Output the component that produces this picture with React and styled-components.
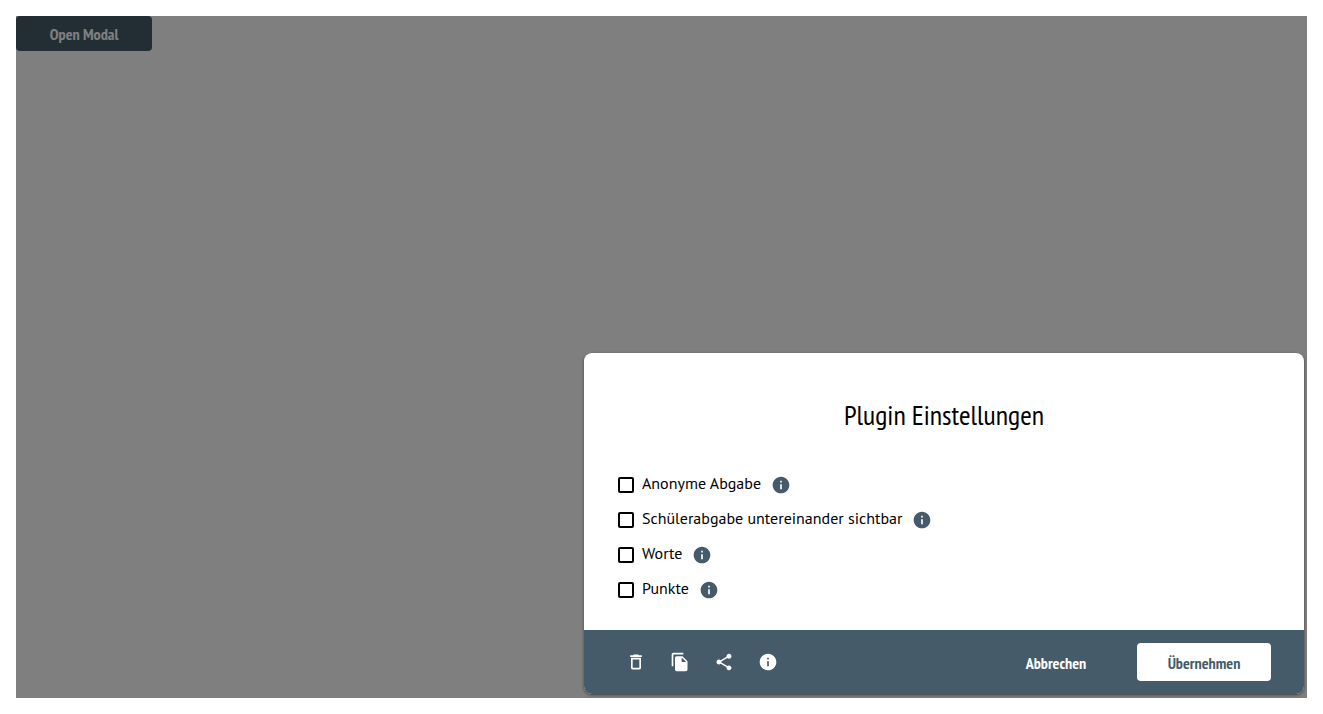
import React from "react";
import styled, { createGlobalStyle } from "styled-components";
import { MdDeleteOutline, MdFileCopy, MdInfo, MdShare } from "react-icons/md";

const narrow = `"PT Sans Narrow", "Liberation Sans Narrow", "Open Sans", sans-serif`;
const body = `"PT Sans", "Noto Sans", sans-serif`;
const slate = "#455b69";

const GlobalStyle = createGlobalStyle`
  *, *::before, *::after { box-sizing: border-box; }
  body { margin: 0; background: #fff; font-family: ${body}; color: #000; }
`;

const Stage = styled.main`
  position: relative;
  margin: 16px;
  min-height: calc(100vh - 32px);
`;

const Button = styled.button`
  min-width: ${(p) => (p.$compact ? 136 : 134)}px;
  height: ${(p) => (p.$compact ? 35 : 38)}px;
  padding: ${(p) => (p.$compact ? 0 : 2)}px 16px 0;
  border: 0;
  border-radius: 4px;
  background: ${(p) => p.$background || "transparent"};
  color: ${(p) => p.$color || "#fff"};
  font: bold 16px/20px ${narrow};
  cursor: pointer;
`;

const Overlay = styled.div`
  position: absolute;
  inset: 0;
  display: flex;
  justify-content: flex-end;
  align-items: flex-end;
  padding: 4px 3px;
  overflow: hidden;
  background: rgba(0, 0, 0, 0.5);
`;

const Dialog = styled.section`
  width: 720px;
  max-width: 100%;
  border-radius: 8px;
  overflow: hidden;
  background: #fff;
  box-shadow: 0 1px 3px rgba(0, 0, 0, 0.5);
`;

const Content = styled.div`
  padding: 44px 32px 23px;
`;

const Title = styled.h2`
  margin: 0 0 34px;
  text-align: center;
  font: normal 28px/36px ${narrow};
`;

const Options = styled.ul`
  margin: 0;
  padding: 0;
  list-style: none;
`;

const Option = styled.li`
  display: flex;
  align-items: center;
  gap: 10px;
  height: 35px;
`;

const Label = styled.label`
  display: flex;
  align-items: center;
  gap: 8px;
  padding-left: 2px;
  font-size: 16px;
  line-height: 20px;
  cursor: pointer;
`;

const LabelText = styled.span`
  padding-bottom: 4px;
`;

const Checkbox = styled.input`
  appearance: none;
  width: 16px;
  height: 16px;
  margin: 0;
  border: 2px solid #000;
  border-radius: 2px;
  background: #fff;

  &:checked { background: ${slate}; }
`;

const IconButton = styled.button`
  display: flex;
  padding: 0;
  border: 0;
  background: none;
  color: ${(p) => p.$color || "#fff"};
  font-size: 20px;
  cursor: pointer;
`;

const Footer = styled.footer`
  display: flex;
  flex-wrap: wrap;
  align-items: center;
  justify-content: space-between;
  min-height: 64px;
  padding: 0 33px 0 42px;
  background: ${slate};
`;

const Tools = styled.div`
  display: flex;
  gap: 24px;
`;

const Actions = styled.div`
  display: flex;
  gap: 14px;
`;

const options = [
  "Anonyme Abgabe",
  "Schülerabgabe untereinander sichtbar",
  "Worte",
  "Punkte",
];

const tools = [
  ["Löschen", MdDeleteOutline],
  ["Kopieren", MdFileCopy],
  ["Teilen", MdShare],
  ["Info", MdInfo],
];

export default function App() {
  return (
    <>
      <GlobalStyle />
      <Stage>
        <Button type="button" $compact $background={slate}>
          Open Modal
        </Button>
        <Overlay>
          <Dialog role="dialog" aria-modal="true" aria-labelledby="settings-title">
            <Content>
              <Title id="settings-title">Plugin Einstellungen</Title>
              <Options>
                {options.map((name, i) => (
                  <Option key={name}>
                    <Label htmlFor={`option-${i}`}>
                      <Checkbox type="checkbox" id={`option-${i}`} />
                      <LabelText>{name}</LabelText>
                    </Label>
                    <IconButton type="button" $color={slate} aria-label={`Info: ${name}`}>
                      <MdInfo />
                    </IconButton>
                  </Option>
                ))}
              </Options>
            </Content>
            <Footer>
              <Tools>
                {tools.map(([name, Icon]) => (
                  <IconButton key={name} type="button" aria-label={name}>
                    <Icon />
                  </IconButton>
                ))}
              </Tools>
              <Actions>
                <Button type="button">Abbrechen</Button>
                <Button type="button" $background="#fff" $color={slate}>
                  Übernehmen
                </Button>
              </Actions>
            </Footer>
          </Dialog>
        </Overlay>
      </Stage>
    </>
  );
}
